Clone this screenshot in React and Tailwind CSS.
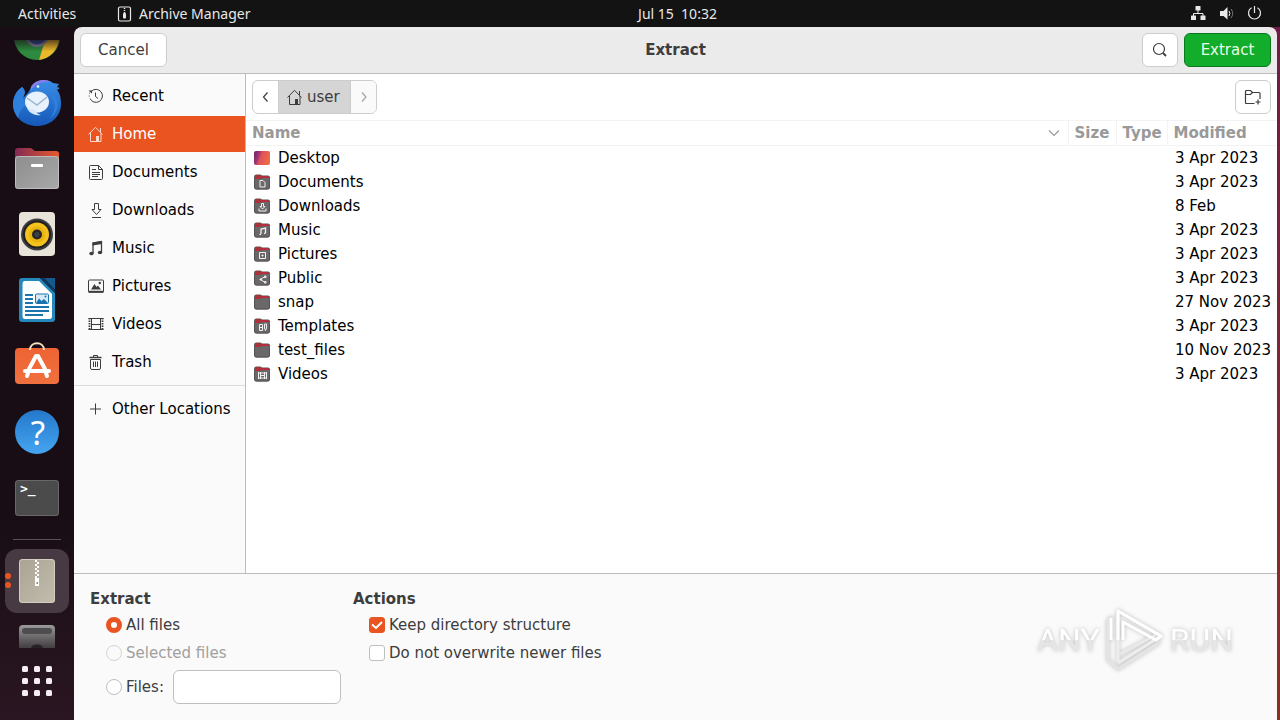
import { useState } from "react";

const ChromeIcon = () => (
  <svg viewBox="0 0 48 48" className="w-12 h-12 shrink-0">
    <defs>
      <linearGradient id="shade" x1="0" y1="0" x2="0" y2="1">
        <stop offset="0.550" stopColor="#180d14" stopOpacity="0.700" />
        <stop offset="0.800" stopColor="#180d14" stopOpacity="0" />
      </linearGradient>
    </defs>
    <circle cx="24" cy="24" r="23" fill="#2d8a3e" />
    <path d="M33 24 L46 22 A23 23 0 0 1 26 47 Z" fill="#edb92b" />
    <path d="M24 24 L4 12.500 A23 23 0 0 1 44 12.500 Z" fill="#d93025" />
    <circle cx="24" cy="22" r="12" fill="#7f86a0" />
    <circle cx="24" cy="22" r="9.500" fill="#2b4a94" />
    <rect width="48" height="48" fill="url(#shade)" />
  </svg>
);

const MailIcon = () => (
  <svg viewBox="0 0 48 48" className="w-12 h-12">
    <defs>
      <linearGradient id="bird" x1="0" y1="0" x2="0" y2="1">
        <stop offset="0" stopColor="#3a8ee6" />
        <stop offset="1" stopColor="#1557b8" />
      </linearGradient>
    </defs>
    <path d="M9 9 C3 13 0 20 0 26 C0 38 10 48 24 48 C38 48 48 38 48 26 C48 18 46 14 44 12 L47 10 L44 9 L46 6 L40 5 C35 1 25 1 20 6 C17 9 18 12 14 16 C12 18 11 19 10 20 C12 16 13 12 9 9 Z" fill="url(#bird)" />
    <path d="M9 9 C3 13 0 20 0 26 C0 31 2 36 5 40 C6 34 9 30 13 27 L10 20 C12 16 13 12 9 9 Z" fill="#2f7fdc" />
    <path d="M18 9 C22 2 32 0 38 4 C30 3 23 6 18 12 Z" fill="#8d7be8" />
    <path d="M36 16 C43 22 44 33 36 41 C45 36 47 25 42 18 Z" fill="#2f80de" />
    <ellipse cx="24" cy="24" rx="12" ry="10.500" fill="#e8f2fc" />
    <path d="M14 30 C16 35 22 38 28 37 C24 36 23 34 23 32 Z" fill="#d6e8fa" />
    <path d="M14 20 L24 27 L34 19" fill="none" stroke="#9fb5ce" strokeWidth="1.500" />
    <circle cx="25" cy="8.500" r="1.300" fill="#fff" />
  </svg>
);

const FilesIcon = () => (
  <svg viewBox="0 0 48 48" className="w-12 h-12">
    <defs>
      <linearGradient id="tab" x1="0" x2="1">
        <stop offset="0" stopColor="#822a55" />
        <stop offset="1" stopColor="#e85a2c" />
      </linearGradient>
      <linearGradient id="front" x1="0" y1="0" x2="1" y2="1">
        <stop offset="0" stopColor="#8d8d8d" />
        <stop offset="1" stopColor="#a9a9a9" />
      </linearGradient>
    </defs>
    <path d="M2 7 Q2 4 5 4 H17 Q19 4 20 5.500 Q21 7 23 7 H43 Q46 7 46 10 V30 H2 Z" fill="url(#tab)" />
    <rect x="2" y="12" width="44" height="33" rx="3" fill="url(#front)" />
    <rect x="2.500" y="12.500" width="43" height="32" rx="3" fill="none" stroke="#bdbdbd" />
    <rect x="18" y="20" width="12" height="3" rx="1" fill="#fff" />
  </svg>
);

const SpeakerIcon = () => (
  <svg viewBox="0 0 48 48" className="w-12 h-12">
    <rect x="6" y="2" width="36" height="44" rx="4" fill="#e9e4d9" />
    <circle cx="24" cy="24.500" r="16" fill="#3d3d42" />
    <circle cx="24" cy="24.500" r="14" fill="#202023" />
    <circle cx="24" cy="24.500" r="12" fill="#f4c21d" />
    <circle cx="24" cy="24.500" r="8" fill="#e9b20f" />
    <circle cx="24" cy="24.500" r="5" fill="#26262b" />
    <circle cx="24" cy="24.500" r="2.500" fill="#3f3f47" />
  </svg>
);

const WriterIcon = () => (
  <svg viewBox="0 0 48 48" className="w-12 h-12">
    <path d="M6 5 Q6 2 9 2 H27 L42 17 V43 Q42 46 39 46 H9 Q6 46 6 43 Z" fill="#2588bd" />
    <path d="M9.500 8 Q9.500 5 12 5 H26 L39 18 V40 Q39 43 36.500 43 H12 Q9.500 43 9.500 40 Z" fill="#fff" />
    <path d="M31 2 H42 V14 Z" fill="#15598f" />
    <path d="M27 2 L42 17 V14 L31 2 Z" fill="#0c3a5e" />
    <path d="M12 19h8M12 23h8M12 27h8M12 31h24M12 35h24M12 39h18" stroke="#1b75ad" strokeWidth="2" />
    <rect x="22.500" y="18" width="13" height="9.500" rx="1" fill="#d4eaf7" stroke="#1b75ad" />
    <path d="M23 27 L26 22.500 L28.500 25 L31 23 L35 27 Z" fill="#1b75ad" />
    <circle cx="32.500" cy="20.500" r="1" fill="#1b75ad" />
  </svg>
);

const SoftwareIcon = () => (
  <svg viewBox="0 0 48 48" className="w-12 h-12">
    <defs>
      <linearGradient id="bag" x1="0" y1="0" x2="0" y2="1">
        <stop offset="0" stopColor="#ee6334" />
        <stop offset="1" stopColor="#f0703f" />
      </linearGradient>
    </defs>
    <rect x="2" y="6" width="44" height="36" rx="4" fill="url(#bag)" />
    <path d="M17 8 C17 -1 31 -1 31 8" fill="none" stroke="#f8e2c4" strokeWidth="2" />
    <g stroke="#fff" strokeWidth="4" strokeLinecap="round">
      <line x1="12" y1="29" x2="36" y2="29" />
      <line x1="23" y1="14" x2="16" y2="27" />
      <line x1="25" y1="14" x2="32" y2="27" />
      <line x1="15" y1="31" x2="14" y2="34" />
      <line x1="33" y1="31" x2="34" y2="34" />
    </g>
  </svg>
);

const HelpIcon = () => (
  <svg viewBox="0 0 48 48" className="w-12 h-12">
    <defs>
      <linearGradient id="help" x1="0" y1="0" x2="0" y2="1">
        <stop offset="0" stopColor="#2478cb" />
        <stop offset="1" stopColor="#45a5f0" />
      </linearGradient>
    </defs>
    <circle cx="24" cy="24" r="22" fill="url(#help)" />
    <text x="25" y="36.500" textAnchor="middle" fontFamily="Noto Sans" fontSize="33" fill="#fff">?</text>
  </svg>
);

const TerminalIcon = () => (
  <svg viewBox="0 0 48 48" className="w-12 h-12">
    <rect x="2" y="6" width="44" height="36" rx="3.500" fill="#4b4b4b" />
    <rect x="2.500" y="6.500" width="43" height="35" rx="3" fill="none" stroke="#686868" />
    <text x="7" y="19" fontFamily="DejaVu Sans Mono" fontWeight="bold" fontSize="13" fill="#fff">&gt;_</text>
  </svg>
);

const ZipIcon = () => (
  <svg viewBox="0 0 48 48" className="w-12 h-12">
    <defs>
      <linearGradient id="zip" x1="0" y1="0" x2="1" y2="1">
        <stop offset="0" stopColor="#a9a393" />
        <stop offset="1" stopColor="#c3bdae" />
      </linearGradient>
    </defs>
    <rect x="6" y="2" width="36" height="44" rx="3.500" fill="url(#zip)" />
    <rect x="6.500" y="2.500" width="35" height="43" rx="3" fill="none" stroke="#d3cec2" />
    <path d="M23 3v18" stroke="#fff" strokeWidth="2" strokeDasharray="2 2" />
    <path d="M25 5v18" stroke="#fff" strokeWidth="2" strokeDasharray="2 2" />
    <path d="M22 21h4v8h-4z" fill="#fff" />
    <path d="M23.500 25h1.500v2h-1.500z" fill="#8b8577" />
  </svg>
);

const DiskIcon = () => (
  <svg viewBox="0 0 48 48" className="w-12 h-12 shrink-0">
    <defs>
      <linearGradient id="disk" x1="0" y1="0" x2="0" y2="1">
        <stop offset="0" stopColor="#9a9a9a" />
        <stop offset="0.500" stopColor="#464144" />
      </linearGradient>
    </defs>
    <rect x="6" y="2" width="36" height="44" rx="4" fill="url(#disk)" />
    <rect x="9" y="5" width="30" height="6" rx="3" fill="#4d4d4f" />
    <ellipse cx="24" cy="25" rx="6" ry="3.500" fill="#252124" />
  </svg>
);

const AppsIcon = () => (
  <svg viewBox="0 0 48 48" className="w-12 h-12" fill="#f6eef2">
    {[9, 21, 33].map((y) =>
      [9, 21, 33].map((x) => <rect key={`${x}-${y}`} x={x} y={y} width="6" height="6" rx="1.500" />)
    )}
  </svg>
);

const dockApps = [
  { name: "Mail", icon: MailIcon },
  { name: "Files", icon: FilesIcon },
  { name: "Music player", icon: SpeakerIcon },
  { name: "Writer", icon: WriterIcon },
  { name: "Software", icon: SoftwareIcon },
  { name: "Help", icon: HelpIcon },
  { name: "Terminal", icon: TerminalIcon },
];

// 16px symbolic glyphs, drawn in currentColor
const glyphs = {
  recent: (
    <>
      <path d="M3.300 3.300 A6.500 6.500 0 1 1 2 10.500" />
      <path d="M1.200 8.500v-1M1.500 5.500l.4-1" />
      <path d="M7.500 4.500v4l2.500 2" />
      <path d="M.500 2.500h3.500v3z" fill="currentColor" stroke="none" />
    </>
  ),
  home: (
    <>
      <path d="M.500 8.500 L7.500 1.300 L14.500 8.500" />
      <path d="M2.500 7v8.500h10.500V7" />
      <path d="M12.500 2v4" />
      <path d="M8 10h3v5.500h-3z" fill="currentColor" stroke="none" />
    </>
  ),
  document: (
    <>
      <path d="M1.500 2.500q0-1 1-1H10.500l4 4v9q0 1-1 1h-11q-1 0-1-1z" />
      <path d="M10.500 1.500v4h4M4 5.500h4M4 8.500h8M4 10.500h8M4 12.500h6" />
    </>
  ),
  download: (
    <>
      <path d="M6.500 1.500h4v6h2.500L8.500 12.500 4 7.500h2.500z" />
      <path d="M4 15.500h9" />
    </>
  ),
  music: (
    <>
      <path d="M5 13V3l8.500-1.500v10.500" strokeWidth="1.300" />
      <path d="M4.500 2.500l9.500-1.500v3l-9.500 1.500z" fill="currentColor" stroke="none" />
      <ellipse cx="3.500" cy="13.500" rx="2.200" ry="1.800" fill="currentColor" stroke="none" />
      <ellipse cx="12" cy="12.500" rx="2.200" ry="1.800" fill="currentColor" stroke="none" />
    </>
  ),
  picture: (
    <>
      <rect x=".500" y="2" width="15" height="12" rx="1" />
      <path d="M.500 13.800h15" strokeWidth="2" />
      <path d="M3 11.500 L6.500 6 L8.500 9 L10 7.500 L13 11.500z" fill="currentColor" stroke="none" />
      <circle cx="11.800" cy="5" r="1.200" fill="currentColor" stroke="none" />
    </>
  ),
  video: (
    <>
      <rect x="3.500" y="2.500" width="9" height="11" />
      <path d="M3.500 8.500h9" />
      <path d="M1.500 2v12.500M14.500 2v12.500" strokeWidth="1.800" strokeDasharray="1.500 1" />
      <path d="M.500 2.500h15M.500 13.500h15" />
    </>
  ),
  trash: (
    <>
      <path d="M2.500 5.500h10V14q0 1.500-1.500 1.500H4q-1.500 0-1.500-1.500z" />
      <path d="M1.500 3.500h12" strokeWidth="1.500" />
      <path d="M5.500 3V1.500h4V3M5.500 7.500v5.500M7.500 7.500v5.500M9.500 7.500v5.500" />
    </>
  ),
  plus: <path d="M7.500 2.500v11M2 8h11" />,
};

const Glyph = ({ name, className = "" }) => (
  <svg viewBox="0 0 16 16" fill="none" stroke="currentColor" strokeWidth="1" className={`w-4 h-4 shrink-0 ${className}`}>
    {glyphs[name]}
  </svg>
);

const places = [
  { name: "Recent", icon: "recent" },
  { name: "Home", icon: "home" },
  { name: "Documents", icon: "document" },
  { name: "Downloads", icon: "download" },
  { name: "Music", icon: "music" },
  { name: "Pictures", icon: "picture" },
  { name: "Videos", icon: "video" },
  { name: "Trash", icon: "trash" },
];

const emblems = {
  document: <path d="M6 6.500h3l2 2V13H6z" />,
  download: <path d="M7.500 5.500h2v3h1.500L8.500 11 6 8.500h1.500zM5 10.500v2.500h7v-2.500" />,
  music: <path d="M7 12V7l4.500-1v5M5.500 12.300H7M10 11.300h1.500" strokeWidth="1.300" />,
  picture: <path d="M5.500 6.500h6v6h-6zM8 9h1v1H8z" />,
  share: <path d="M11 6.500L6.500 9.500l4.500 3M10.500 6h1.500v1.500h-1.500zM6 9h1.500v1H6zM10.500 11.500h1.500v1.500h-1.500z" />,
  template: <path d="M5.500 6.500h3v6h-3zM5.500 9.500h3M10.500 6v4l1 2.500 1-2.500V6z" />,
  video: <path d="M4.500 6v7M12.500 6v7M6.500 6v7M10.500 6v7M6.500 9.500h4M4.500 7h8M4.500 12h8" />,
};

const FolderIcon = ({ emblem }) => {
  if (emblem === "desktop") {
    return (
      <svg viewBox="0 0 16 16" className="w-4 h-4 shrink-0">
        <defs>
          <linearGradient id="desk" x1="0" x2="1" y1="0" y2="0.300">
            <stop offset="0" stopColor="#6b2468" />
            <stop offset="0.350" stopColor="#a03878" />
            <stop offset="0.500" stopColor="#e0505c" />
            <stop offset="1" stopColor="#ee6a45" />
          </linearGradient>
        </defs>
        <rect x="0" y="1" width="16" height="14" rx="2" fill="url(#desk)" />
      </svg>
    );
  }
  return (
    <svg viewBox="0 0 16 16" className="w-4 h-4 shrink-0">
      <path d="M0 3 Q0 .500 2.500 .500 H6.500 L8 1.500 H14 Q16 1.500 16 3.500 V8 H0 Z" fill="#5c5658" />
      <path d="M1 3 Q1 1.300 2.500 1.300 H6.300 L7.800 2 H14 Q15.200 2 15.200 3.500 V6 H1 Z" fill="#b0303c" />
      <path d="M0 6.500 Q0 5 1.500 5 H6.500 L8.500 4 H14.500 Q16 4 16 5.500 V13 Q16 15.500 13.500 15.500 H2.500 Q0 15.500 0 13 Z" fill="#6b686a" />
      <path d="M.500 6 V13 Q.500 15 2.500 15 H13.500 Q15.500 15 15.500 13 V6" fill="none" stroke="#555254" />
      <g fill="none" stroke="#f2f2f2">{emblems[emblem]}</g>
    </svg>
  );
};

const folders = [
  { name: "Desktop", emblem: "desktop", modified: "3 Apr 2023" },
  { name: "Documents", emblem: "document", modified: "3 Apr 2023" },
  { name: "Downloads", emblem: "download", modified: "8 Feb" },
  { name: "Music", emblem: "music", modified: "3 Apr 2023" },
  { name: "Pictures", emblem: "picture", modified: "3 Apr 2023" },
  { name: "Public", emblem: "share", modified: "3 Apr 2023" },
  { name: "snap", modified: "27 Nov 2023" },
  { name: "Templates", emblem: "template", modified: "3 Apr 2023" },
  { name: "test_files", modified: "10 Nov 2023" },
  { name: "Videos", emblem: "video", modified: "3 Apr 2023" },
];

const TopBar = () => (
  <header className="grid grid-cols-[75px_1fr_auto_1fr] items-center h-[27px] px-[18px] bg-[#131313] text-[#e8e8e8] text-sm font-['Noto_Sans',sans-serif]">
    <button className="text-left">Activities</button>
    <button className="flex items-center gap-1.5 pl-6 whitespace-nowrap">
      <svg viewBox="0 0 16 16" className="w-4 h-4" fill="none" stroke="currentColor">
        <rect x="1.500" y="1" width="12" height="14" rx="1.500" strokeWidth="1.200" />
        <path d="M7.500 2v5" strokeWidth="1.500" strokeDasharray="1 1" />
        <rect x="6" y="7" width="3" height="5.500" rx="1" fill="currentColor" stroke="none" />
      </svg>
      Archive Manager
    </button>
    <button className="whitespace-pre">Jul 15  10:32</button>
    <div className="flex justify-end gap-3">
      <svg viewBox="0 0 16 16" className="w-4 h-4" fill="currentColor">
        <rect x="5.500" y="0" width="5" height="4.500" rx=".500" />
        <rect x="1" y="9.500" width="5" height="4.500" rx=".500" />
        <rect x="10.500" y="9.500" width="5" height="4.500" rx=".500" />
        <path d="M8 4v3.500M3.500 10V7.500h9.500V10" fill="none" stroke="currentColor" />
      </svg>
      <svg viewBox="0 0 16 16" className="w-4 h-4" fill="currentColor">
        <path d="M2 5h3.500L9.500 1v12.500L5.500 10H2z" />
        <path d="M11 5q1.800 2.500 0 5" fill="none" stroke="currentColor" />
        <path d="M13 3q3.500 4.500 0 9" fill="none" stroke="#777" />
      </svg>
      <svg viewBox="0 0 16 16" className="w-4 h-4" fill="none" stroke="currentColor" strokeWidth="1.200">
        <path d="M8.500 0v7M5.500 1.800a6 6 0 1 0 6 0" />
      </svg>
    </div>
  </header>
);

const Dock = () => (
  <nav className="flex flex-col items-center w-[74px] shrink-0 bg-linear-to-b from-[#180d14] from-70% to-[#2a1622]">
    <button aria-label="Browser" className="flex items-end h-[29px] mt-[13px] pb-2 overflow-hidden">
      <ChromeIcon />
    </button>
    {dockApps.map((app) => (
      <button key={app.name} aria-label={app.name} className="flex items-center h-[66px]">
        <app.icon />
      </button>
    ))}
    <div className="w-12 h-px my-2 bg-[#5a4f56]"></div>
    <div className="flex items-center h-[66px]">
      <button aria-label="Archive Manager" className="relative flex items-center justify-center w-16 h-16 rounded-xl bg-[#473a42]">
        <ZipIcon />
        <span className="absolute left-0 top-6 w-1.5 h-1.5 rounded-full bg-[#e95420]"></span>
        <span className="absolute left-0 top-[33px] w-1.5 h-1.5 rounded-full bg-[#e95420]"></span>
      </button>
    </div>
    <button aria-label="Disk" className="flex items-start h-[34px] pt-[9px] overflow-hidden">
      <DiskIcon />
    </button>
    <button aria-label="Show applications" className="flex items-center h-[66px]">
      <AppsIcon />
    </button>
  </nav>
);

const Sidebar = ({ current, onSelect }) => (
  <aside className="w-[172px] shrink-0 pt-1 border-r border-[#bdbdbd] bg-[#fafafa] text-black">
    <ul className="flex flex-col gap-0.5">
      {places.map((place) => (
        <li key={place.name}>
          <button
            onClick={() => onSelect(place.name)}
            className={`flex items-center gap-2 w-full h-9 pl-3.5 ${current === place.name ? "bg-[#e95420] text-white" : ""}`}
          >
            <Glyph name={place.icon} className={current === place.name ? "text-[#fbd9cd]" : "text-[#3d3d3d]"} />
            {place.name}
          </button>
        </li>
      ))}
    </ul>
    <hr className="my-[5px] border-[#dcdcdc]" />
    <button className="flex items-center gap-2 w-full h-9 pl-3.5 whitespace-nowrap">
      <Glyph name="plus" className="text-[#3d3d3d]" />
      Other Locations
    </button>
  </aside>
);

const FileTable = () => (
  <table className="w-full table-fixed border-collapse text-left">
    <thead>
      <tr className="h-[25px] border-y border-[#f3f3f3] text-[#999]">
        <th className="p-0 pl-1.5">
          <div className="flex items-center justify-between pr-2">
            Name
            <svg viewBox="0 0 12 12" className="w-3 h-3" fill="none" stroke="currentColor" strokeWidth="1.200">
              <path d="M1 3.500l5 5 5-5" />
            </svg>
          </div>
        </th>
        <th className="w-12 p-0 pl-1.5 border-x border-[#f3f3f3]">Size</th>
        <th className="w-[51px] p-0 pl-1.5 border-r border-[#f3f3f3]">Type</th>
        <th className="w-[110px] p-0 pl-1.5">Modified</th>
      </tr>
    </thead>
    <tbody className="text-black">
      {folders.map((folder) => (
        <tr key={folder.name} className="h-6">
          <td className="p-0 pl-2">
            <div className="flex items-center gap-2">
              <FolderIcon emblem={folder.emblem} />
              {folder.name}
            </div>
          </td>
          <td></td>
          <td></td>
          <td className="p-0 pl-2 whitespace-nowrap">{folder.modified}</td>
        </tr>
      ))}
    </tbody>
  </table>
);

const Browser = () => (
  <section className="flex-1 min-w-0 bg-white">
    <div className="flex items-center justify-between h-[46px] px-1.5">
      <div className="flex h-[34px] border border-[#cdcdcd] rounded-md overflow-hidden">
        <button aria-label="Back" className="flex items-center justify-center w-[25px]">
          <svg viewBox="0 0 12 12" className="w-3 h-3" fill="none" stroke="#3d3d3d" strokeWidth="1.200">
            <path d="M7.500 1.500l-4 4.500 4 4.500" />
          </svg>
        </button>
        <button className="flex items-center gap-1 pl-2 pr-2.5 bg-[#d5d5d5] border-x border-[#cdcdcd]">
          <Glyph name="home" />
          user
        </button>
        <button aria-label="Forward" className="flex items-center justify-center w-[25px] bg-[#fafafa]">
          <svg viewBox="0 0 12 12" className="w-3 h-3" fill="none" stroke="#a5a5a5" strokeWidth="1.200">
            <path d="M5 1.500l4 4.500-4 4.500" />
          </svg>
        </button>
      </div>
      <button aria-label="Create folder" className="flex items-center justify-center w-9 h-[34px] border border-[#cdcdcd] rounded-md">
        <svg viewBox="0 0 18 16" className="w-[18px] h-4" fill="none" stroke="#3d3d3d" strokeWidth="1.200">
          <path d="M10.500 14.500h-8q-1 0-1-1v-11q0-1 1-1h4l2 2h6.500q1 0 1 1V10M1.500 5.500h5l2-2M14 10.500v5M11.500 13h5" />
        </svg>
      </button>
    </div>
    <FileTable />
  </section>
);

const Radio = ({ id, label, ...props }) => (
  <div className="flex items-center gap-1 h-7">
    <input
      type="radio"
      name="extract"
      id={id}
      className="peer w-4 h-4 appearance-none rounded-full border border-[#bfbfbf] bg-white checked:border-[5px] checked:border-[#e95420] disabled:border-[#d4d4d4] disabled:bg-[#fafafa]"
      {...props}
    />
    <label htmlFor={id} className="peer-disabled:text-[#a0a0a0]">{label}</label>
  </div>
);

const Checkbox = ({ id, label, ...props }) => (
  <div className="relative flex items-center gap-1 h-7">
    <input
      type="checkbox"
      id={id}
      className="peer w-4 h-4 appearance-none rounded-[3px] border border-[#bfbfbf] bg-white checked:border-[#e95420] checked:bg-[#e95420]"
      {...props}
    />
    <svg viewBox="0 0 16 16" className="absolute left-0 w-4 h-4 hidden peer-checked:block pointer-events-none" fill="none" stroke="#fff" strokeWidth="2">
      <path d="M3 7.500l4 3.500 6-6" />
    </svg>
    <label htmlFor={id}>{label}</label>
  </div>
);

const Watermark = () => (
  <div className="absolute right-11 bottom-12 flex items-center gap-1.5 text-[32px] leading-10 font-['Roboto',sans-serif] drop-shadow-[0_0_2px_rgba(0,0,0,0.25)] pointer-events-none">
    <span className="bg-linear-to-b from-white from-50% to-[#e6e6e6] to-50% bg-clip-text text-transparent">ANY</span>
    <svg viewBox="0 0 58 64" className="w-[58px] h-16" fill="none" strokeWidth="3" strokeLinejoin="round">
      <path d="M7 9 L2 12 V52 L12 61 L54 34" stroke="#e4e4e4" />
      <path d="M14 46 L50 27" stroke="#e9e9e9" />
      <path d="M12 54 V3 L55 28 L12 55" stroke="#ededed" />
      <path d="M12 32 V3 L55 28 L50 32 L17 14 V32" stroke="#fff" />
      <path d="M5 32 V10" stroke="#fff" />
    </svg>
    <span className="bg-linear-to-b from-white from-50% to-[#e6e6e6] to-50% bg-clip-text text-transparent">RUN</span>
  </div>
);

const Options = () => (
  <footer className="relative flex gap-3 px-4 py-4 border-t border-[#bdbdbd] bg-[#fafafa]">
    <fieldset>
      <legend className="mb-[3px] font-bold leading-[18px]">Extract</legend>
      <div className="pl-4">
        <Radio id="all" label="All files" defaultChecked />
        <Radio id="selected" label="Selected files" disabled />
        <div className="flex items-center gap-[9px] mt-[3px]">
          <Radio id="files" label="Files:" />
          <input type="text" aria-label="Files" className="w-[168px] h-[34px] px-2 border border-[#bfbfbf] rounded-md bg-white" />
        </div>
      </div>
    </fieldset>
    <fieldset>
      <legend className="mb-[3px] font-bold leading-[18px]">Actions</legend>
      <div className="pl-4">
        <Checkbox id="keep" label="Keep directory structure" defaultChecked />
        <Checkbox id="newer" label="Do not overwrite newer files" />
      </div>
    </fieldset>
    <Watermark />
  </footer>
);

const App = () => {
  const [place, setPlace] = useState("Home");

  return (
    <div className="min-h-screen flex flex-col bg-[#131313]">
      <TopBar />
      <div className="flex flex-1 bg-linear-to-b from-[#6d1c45] to-[#8a3020]">
        <Dock />
        <div className="flex-1 min-w-0 mr-[3px] bg-linear-to-r from-[#180d14] from-50% to-transparent to-50%">
          <main className="flex flex-col h-full rounded-t-lg overflow-hidden text-[15px] leading-5 text-[#3d3d3d] font-['DejaVu_Sans',sans-serif]">
            <div className="grid grid-cols-[1fr_auto_1fr] items-center h-[47px] px-1.5 border-b border-[#bdbdbd] bg-[#ebebeb]">
              <button className="justify-self-start w-[87px] h-[34px] border border-[#cdcdcd] rounded-md bg-white">Cancel</button>
              <h1 className="font-bold">Extract</h1>
              <div className="flex justify-end gap-1.5">
                <button aria-label="Search" className="flex items-center justify-center w-9 h-[34px] border border-[#cdcdcd] rounded-md bg-white">
                  <svg viewBox="0 0 16 16" className="w-4 h-4" fill="none" stroke="currentColor" strokeWidth="1.200">
                    <circle cx="7" cy="7" r="5.500" />
                    <path d="M11 11l3 3" strokeWidth="1.800" />
                  </svg>
                </button>
                <button className="w-[87px] h-[34px] border border-[#0b7a1e] rounded-md bg-[#12ad2b] text-[#eafbe9]">Extract</button>
              </div>
            </div>
            <div className="flex flex-1">
              <Sidebar current={place} onSelect={setPlace} />
              <Browser />
            </div>
            <Options />
          </main>
        </div>
      </div>
    </div>
  );
};

export default App;
